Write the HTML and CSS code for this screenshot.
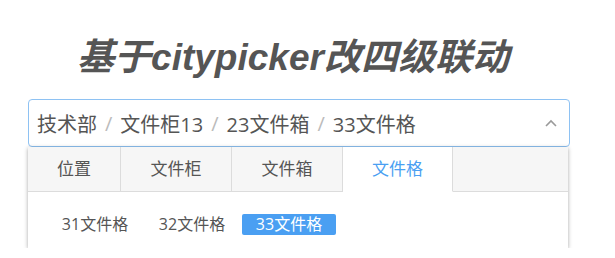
FILE: index.html
```html
<!DOCTYPE html>
<html lang="zh-CN">
<head>
    <meta charset="UTF-8">
    <title>基于citypicker改四级联动</title>
    <link rel="stylesheet" href="styles.css">
</head>
<body>
    <h1 class="page-title">基于citypicker改四级联动</h1>

    <div class="picker">
        <div class="picker-input">
            <span class="picker-value">技术部</span>
            <span class="picker-sep">/</span>
            <span class="picker-value">文件柜13</span>
            <span class="picker-sep">/</span>
            <span class="picker-value">23文件箱</span>
            <span class="picker-sep">/</span>
            <span class="picker-value">33文件格</span>
            <svg class="picker-arrow" width="12" height="8" viewBox="0 0 12 8">
                <polyline points="1,7 6,2 11,7" fill="none" stroke="#9a9a9a" stroke-width="1.6"/>
            </svg>
        </div>

        <div class="picker-dropdown">
            <div class="picker-tabs">
                <a class="picker-tab tab-first">位置</a>
                <a class="picker-tab">文件柜</a>
                <a class="picker-tab">文件箱</a>
                <a class="picker-tab active">文件格</a>
            </div>
            <div class="picker-list">
                <a class="picker-item">31文件格</a>
                <a class="picker-item">32文件格</a>
                <a class="picker-item active">33文件格</a>
            </div>
        </div>
    </div>
</body>
</html>
```

FILE: styles.css
```css
:root {
    --blue: #4a9ff2;
    --border-focus: #8ec2f3;
    --tab-line: #dcdcdc;
    --text: #555;
}

* {
    box-sizing: border-box;
}

body {
    margin: 0;
    background: #fff;
    color: var(--text);
    font-family: "Open Sans", "Noto Sans CJK SC", sans-serif;
}

.page-title {
    margin: 0;
    padding: 36px 12px 0 0;
    width: 542px;
    margin-left: 28px;
    height: 99px;
    font-family: "Liberation Sans", "Noto Sans CJK SC", sans-serif;
    font-size: 37px;
    line-height: 44px;
    font-weight: bold;
    font-style: italic;
    text-align: center;
    color: #555;
}

.picker {
    width: 542px;
    margin-left: 28px;
}

.picker-input {
    display: flex;
    align-items: center;
    height: 48px;
    padding: 0 12px 0 8px;
    border: 1px solid var(--border-focus);
    border-radius: 4px;
    font-size: 20px;
    color: var(--text);
}

.picker-sep {
    margin: 0 8px;
    color: #bbb;
}

.picker-arrow {
    margin-left: auto;
}

.picker-dropdown {
    width: 540px;
    background: #fff;
    box-shadow: 0 1px 4px rgba(0,0,0,0.35);
}

.picker-tabs {
    display: flex;
    height: 45px;
    background: #f6f6f6;
    border-bottom: 1px solid var(--tab-line);
}

.picker-tab {
    width: 111px;
    height: 45px;
    line-height: 44px;
    text-align: center;
    font-size: 17px;
    color: var(--text);
    border-right: 1px solid var(--tab-line);
}

.tab-first {
    width: 93px;
}

.picker-tab.active {
    width: 110px;
    background: #fff;
    color: var(--blue);
    border-bottom: 1px solid #fff;
}

.picker-list {
    display: flex;
    gap: 3px;
    padding: 22px 20px 13px;
}

.picker-item {
    width: 94px;
    line-height: 21px;
    text-align: center;
    font-size: 16px;
    color: var(--text);
    border-radius: 2px;
}

.picker-item.active {
    background: var(--blue);
    color: #fff;
}
```
